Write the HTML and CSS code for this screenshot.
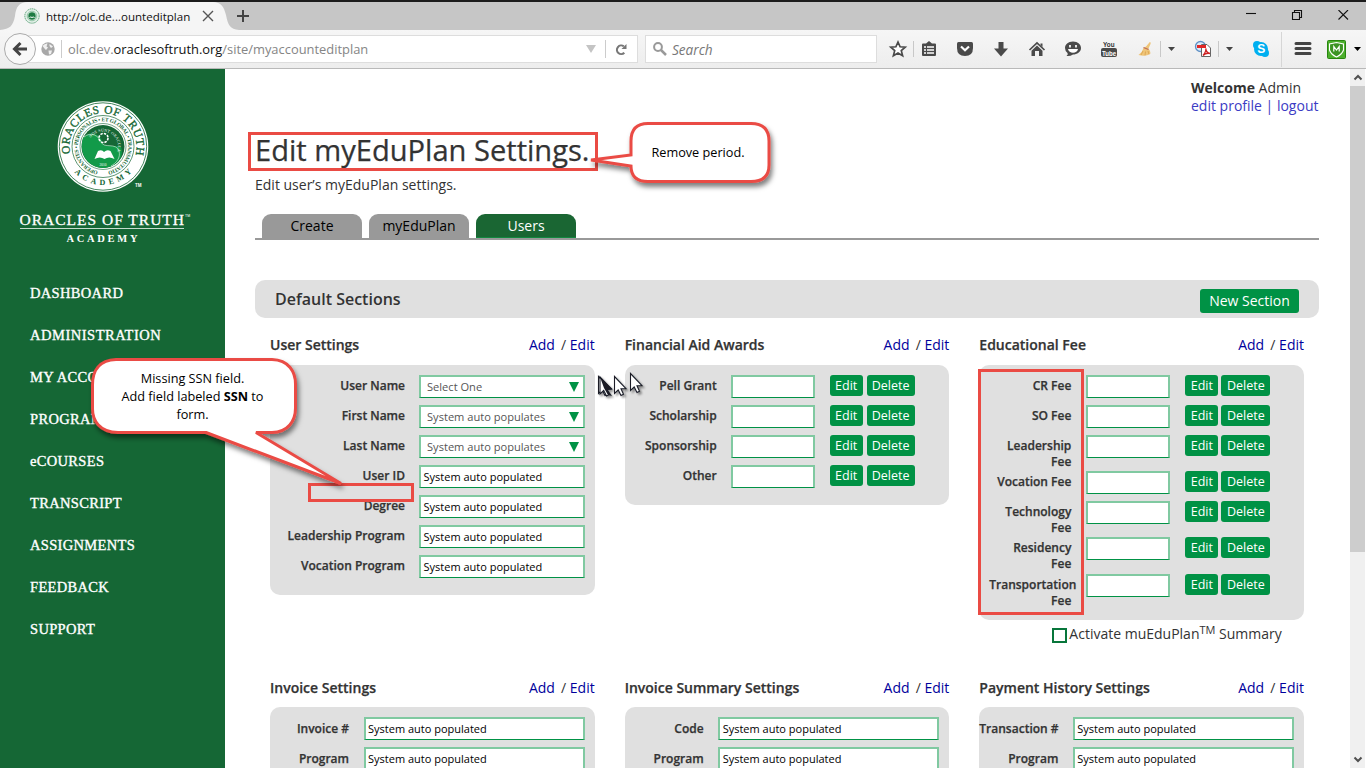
FILE: index.html
```html
<!DOCTYPE html>
<html lang="en">
<head>
<meta charset="utf-8">
<title>Edit myEduPlan Settings</title>
<link rel="stylesheet" href="styles.css">
</head>
<body>
<header class="chrome">
  <div class="tabbar">
    <svg class="tabshape" width="240" height="28" viewBox="0 0 240 28"><path d="M0 28C10 27 13 24 15 14C16 5 19 0 28 0H213C221 0 224 5 226 13C228 23 230 27 239 28Z" fill="#f5f5f5"/></svg>
    <svg class="favicon" width="16" height="16" viewBox="0 0 16 16"><circle cx="8" cy="8" r="7.200" fill="#e3f0e8" stroke="#5fa57c" stroke-dasharray="1.500 .6"/><circle cx="8" cy="8" r="4.800" fill="none" stroke="#8fc3a4"/><circle cx="8" cy="8" r="3.700" fill="#1d7a42"/><path d="M5.500 9.500q1.200-1 2.500 0q1.200-1 2.500 0" stroke="#fff" fill="none"/></svg>
    <span class="tabtitle">http://olc.de...ounteditplan</span>
    <svg class="tabclose" width="12" height="12" viewBox="0 0 12 12"><path d="M1 1L11 11M11 1L1 11" stroke="#555" stroke-width="1.400"/></svg>
    <svg class="tabplus" width="12" height="12" viewBox="0 0 12 12"><path d="M6 0V12M0 6H12" stroke="#444" stroke-width="2"/></svg>
    <svg class="winctl" width="104" height="12" viewBox="0 0 104 12"><g fill="none" stroke="#111" stroke-width="1.100"><path d="M0 3.500H10"/><path d="M46.500 2.500H53.500V9.500H46.500ZM48.500 2.500V.5H55.500V7.500H53.500"/><path d="M92.500 0L102 9.500M102 0L92.500 9.500"/></g></svg>
  </div>
  <div class="toolbar">
    <div class="urlbar">
      <svg class="globe" width="14" height="14" viewBox="0 0 14 14"><circle cx="7" cy="7" r="6.700" fill="#a8a8a8"/><path d="M1.500 4q2.500-3 5-2.500l-1 3l1.500 1l-2 2.500l-1.500-1.500zM8.500 2l3.500 2.500l-2 1.500l-1.500-2zM7.500 8.500l3.500 0l-1 3.500l-2 .5z" fill="#f0f0f0"/></svg>
      <span class="vline"></span>
      <span class="url">olc.dev.<b>oraclesoftruth.org</b>/site/myaccounteditplan</span>
      <svg class="drop" width="10" height="8"><path d="M0 0H10L5 8Z" fill="#c4c4c4"/></svg>
      <span class="vline"></span>
      <svg class="reload" width="13" height="13" viewBox="0 0 13 13"><path d="M9.300 9.800A4.300 4.300 0 1 1 8.800 3.300" fill="none" stroke="#777" stroke-width="2.100"/><path d="M6.500 6H11.500V1Z" fill="#777"/></svg>
    </div>
    <div class="back"><svg width="16" height="16" viewBox="0 0 16 16"><path d="M8.500 2L2.500 8L8.500 14M3 8H15" fill="none" stroke="#444" stroke-width="3"/></svg></div>
    <div class="search"><svg width="14" height="14" viewBox="0 0 14 14"><circle cx="5" cy="5" r="3.900" fill="none" stroke="#999" stroke-width="2"/><path d="M8 8L13 13" stroke="#999" stroke-width="2.500"/></svg><i>Search</i></div>
    <svg class="tools" width="480" height="38" viewBox="886 30 480 38">
      <path d="M898 42L900.100 46.800L905.200 47.200L901.300 50.600L902.600 55.700L898 52.900L893.400 55.700L894.700 50.600L890.800 47.200L895.900 46.800Z" fill="#fff" stroke="#4a4a4a" stroke-width="1.700"/>
      <path d="M913.500 41V57M1160.500 41V57M1218.500 41V57" stroke="#c8c8c8"/>
      <path d="M923 43.500H926L929 41L932 43.500H935Q936 43.500 936 44.500V55Q936 56 935 56H923Q922 56 922 55V44.500Q922 43.500 923 43.500Z" fill="#4a4a4a"/><path d="M924 47H926M927 47H934M924 50H926M927 50H934M924 53H926M927 53H934" stroke="#fff" stroke-width="1.500"/>
      <path d="M958.500 42H971.500Q973 42 973 43.500V48Q973 56 965 56Q957 56 957 48V43.500Q957 42 958.500 42Z" fill="#4a4a4a"/><path d="M961 46.500L965 50.200L969 46.500" fill="none" stroke="#fff" stroke-width="2.200"/>
      <path d="M998.500 42H1003.500V48.500H1008L1001 56.500L994 48.500H998.500Z" fill="#4a4a4a"/>
      <path d="M1029.500 50L1037 43L1044.500 50" fill="none" stroke="#4a4a4a" stroke-width="1.700"/><path d="M1031.500 50.700L1037 45.500L1042.500 50.700V56H1039V51H1035V56H1031.500ZM1040.500 43.500H1042.500V47L1040.500 45Z" fill="#4a4a4a"/>
      <path d="M1073 41.500C1078 41.500 1081 44.500 1081 48C1081 52 1077 54.500 1073 54.500Q1070 56.500 1066.500 56Q1068.500 54.500 1067.500 53Q1065 51 1065 48C1065 44.500 1068 41.500 1073 41.500Z" fill="#4a4a4a"/><path d="M1070 45V47.500M1076 45V47.500" stroke="#fff" stroke-width="1.700"/><path d="M1068 49H1078Q1077 52.800 1073 52.800Q1069 52.800 1068 49Z" fill="#fff"/>
      <text x="1103" y="47" class="yt" fill="#333" textLength="11.500" lengthAdjust="spacingAndGlyphs">You</text><rect x="1101" y="48" width="16" height="9" rx="2" fill="#4a4a4a"/><text x="1102" y="55.500" class="yt" fill="#fff" textLength="14" lengthAdjust="spacingAndGlyphs">Tube</text>
      <path d="M1149.800 42Q1151.500 42.500 1150.500 44L1148.500 48.500Q1150.500 51 1150.500 53.500Q1146 57 1138.500 55Q1142.500 52 1143.500 48L1146 46.500Z" fill="#efc578"/><path d="M1143 51L1141 55M1145.500 51.500L1145 55.500M1148 51L1149 54.500" stroke="#d9a04c" stroke-width=".8"/><path d="M1143.500 47.500L1148.500 49.500" stroke="#be6c5a" stroke-width="1.300"/>
      <path d="M1168 47H1175L1171.500 51ZM1226 47H1233L1229.500 51Z" fill="#444"/>
      <circle cx="1200.500" cy="46.500" r="5" fill="#dcebf8" stroke="#5f91c6" stroke-width="1.300"/><path d="M1201.500 44.500H1207L1210.500 48V56.500H1201.500Z" fill="#fff" stroke="#666"/><rect x="1197" y="45" width="9" height="3" fill="#e02727"/><path d="M1203 55.500Q1206.500 51 1205.800 48.500Q1206 52.500 1210 53.500Q1206 52.500 1203 55.500" fill="none" stroke="#c22" stroke-width="1.300"/>
      <circle cx="1261" cy="49" r="7" fill="#00aff0"/><circle cx="1257" cy="45" r="4" fill="#00aff0"/><circle cx="1265" cy="53" r="4" fill="#00aff0"/><text x="1257.200" y="53.300" class="skype" fill="#fff">S</text>
      <path d="M1281.500 32V67" stroke="#d6d6d6"/>
      <path d="M1296 43.500H1310M1296 48.500H1310M1296 53.500H1310" stroke="#444" stroke-width="3" stroke-linecap="round"/>
      <rect x="1327.500" y="40.500" width="18" height="18" rx="1" fill="#4caf2c" stroke="#28860f"/><path d="M1336.500 42.500L1343.500 44V50Q1342 54.500 1336.500 57Q1331 54.500 1329.500 50V44Z" fill="#3c9424" stroke="#fff" stroke-width="1.100"/><path d="M1333.800 51.500V46.500L1336.500 50L1339.200 46.500V51.500" fill="none" stroke="#fff" stroke-width="1.200"/>
      <path d="M1354 47H1361L1357.500 51Z" fill="#000"/>
    </svg>
  </div>
</header>

<div class="page">
  <nav class="sidebar">
    <svg class="logo" width="225" height="180" viewBox="0 69 225 180">
      <defs>
        <path id="arcTop" d="M71.600 158.500A33.500 33.500 0 1 1 134.400 158.500"/>
        <path id="arcBottom" d="M64.500 146.500A38.500 38.500 0 0 0 141.500 146.500"/>
        <path id="arcInner" d="M103 171.700A25.200 25.200 0 1 1 103.100 171.700"/>
        <path id="arcCore" d="M88 146.500A15 15 0 0 1 118 146.500A15 15 0 0 1 116 154"/>
      </defs>
      <circle cx="103" cy="146.500" r="45.300" fill="#fff"/><circle cx="103" cy="146.500" r="43.700" fill="none" stroke="#156735" stroke-width=".8"/>
      <circle cx="103" cy="146.500" r="31" fill="none" stroke="#156735" stroke-width=".7"/><circle cx="103" cy="146.500" r="23" fill="none" stroke="#156735" stroke-width=".6"/>
      <circle cx="103" cy="146.500" r="21.500" fill="#156735"/>
      <path d="M83 138C90 129 101 135 102 141C103 149 115 144 121 147C125 159 114 168 103 168C89 168 78 154 83 138Z" fill="#129a49"/>
      <path d="M84 137C91 131 99 136 101 142C104 149 116 142 119 151C121 158 116 163 111 166" fill="none" stroke="#dff0e5" stroke-width=".6"/>
      <circle cx="103.500" cy="138" r="4.500" fill="none" stroke="#fff" stroke-width="1.600" stroke-dasharray="2.400 1.100"/>
      <path d="M94.500 159L98 151Q102 149 104 152Q107 149 110.500 151L114.500 159Q109 156 104.500 159Q100 156 94.500 159Z" fill="#fff"/>
      <g class="seal" fill="#156735">
        <text font-size="11.500" class="ring"><textPath href="#arcTop" startOffset="5" textLength="120">ORACLES OF TRUTH</textPath></text>
        <text font-size="8" font-weight="bold"><textPath href="#arcBottom" startOffset="28" textLength="65">ACADEMY</textPath></text>
        <text font-size="5.500" font-weight="bold"><textPath href="#arcInner" startOffset="5" textLength="148">OPERANTES • PERSONALIS • ET GLOBAL • TRANSMUTATIO</textPath></text>
        <text font-size="4" fill="#fff"><textPath href="#arcCore" startOffset="9" textLength="43">NOS SUNT ORACULA</textPath></text>
        <text x="99.500" y="166" font-size="3.500" fill="#fff">2010</text>
        <text x="135" y="187" class="tm" font-size="4.500" font-weight="bold" fill="#fff">TM</text>
      </g>
      <g class="seal" fill="#fff"><text x="19.500" y="225" font-size="15.500" textLength="164.500" class="brand">ORACLES OF TRUTH</text><text x="185" y="217" class="tm" font-size="3.500">TM</text>
      <path d="M20 228.500H184" stroke="#c5dccd"/><text x="66.500" y="242" font-size="10.500" font-weight="bold" textLength="71">ACADEMY</text></g>
    </svg>
    <a>DASHBOARD</a><a class="wider">ADMINISTRATION</a><a>MY ACCOUNT</a><a>PROGRAMS</a><a>eCOURSES</a><a>TRANSCRIPT</a><a>ASSIGNMENTS</a><a>FEEDBACK</a><a>SUPPORT</a>
  </nav>

  <main class="main">
    <div class="welcome"><div><b>Welcome</b> Admin</div><div class="wlinks">edit profile | logout</div></div>
    <h1>Edit myEduPlan Settings.</h1>
    <p class="sub">Edit user’s myEduPlan settings.</p>
    <div class="tabs"><span>Create</span><span>myEduPlan</span><span class="on">Users</span></div>
    <div class="bar"><h2>Default Sections</h2><span class="new">New Section</span></div>

    <div class="grid">
      <section>
        <div class="head"><h3>User Settings</h3><span><a>Add</a> / <a>Edit</a></span></div>
        <div class="panel p1">
          <div class="row"><label>User Name</label><span class="in sel">Select One<i></i></span></div>
          <div class="row"><label>First Name</label><span class="in sel">System auto populates<i></i></span></div>
          <div class="row"><label>Last Name</label><span class="in sel">System auto populates<i></i></span></div>
          <div class="row"><label>User ID</label><span class="in">System auto populated</span></div>
          <div class="row"><label>Degree</label><span class="in">System auto populated</span></div>
          <div class="row"><label>Leadership Program</label><span class="in">System auto populated</span></div>
          <div class="row"><label>Vocation Program</label><span class="in">System auto populated</span></div>
        </div>
      </section>
      <section>
        <div class="head"><h3>Financial Aid Awards</h3><span><a>Add</a> / <a>Edit</a></span></div>
        <div class="panel p2">
          <div class="row"><label>Pell Grant</label><span class="in"></span><span class="btn">Edit</span><span class="btn del">Delete</span></div>
          <div class="row"><label>Scholarship</label><span class="in"></span><span class="btn">Edit</span><span class="btn del">Delete</span></div>
          <div class="row"><label>Sponsorship</label><span class="in"></span><span class="btn">Edit</span><span class="btn del">Delete</span></div>
          <div class="row"><label>Other</label><span class="in"></span><span class="btn">Edit</span><span class="btn del">Delete</span></div>
        </div>
      </section>
      <section>
        <div class="head"><h3>Educational Fee</h3><span><a>Add</a> / <a>Edit</a></span></div>
        <div class="panel p2 p3">
          <div class="row"><label>CR Fee</label><span class="in"></span><span class="btn">Edit</span><span class="btn del">Delete</span></div>
          <div class="row"><label>SO Fee</label><span class="in"></span><span class="btn">Edit</span><span class="btn del">Delete</span></div>
          <div class="row two"><label>Leadership<br>Fee</label><span class="in"></span><span class="btn">Edit</span><span class="btn del">Delete</span></div>
          <div class="row"><label>Vocation Fee</label><span class="in"></span><span class="btn">Edit</span><span class="btn del">Delete</span></div>
          <div class="row two"><label>Technology<br>Fee</label><span class="in"></span><span class="btn">Edit</span><span class="btn del">Delete</span></div>
          <div class="row two tall"><label>Residency<br>Fee</label><span class="in"></span><span class="btn">Edit</span><span class="btn del">Delete</span></div>
          <div class="row two"><label><span class="over">Transportation</span><br>Fee</label><span class="in"></span><span class="btn">Edit</span><span class="btn del">Delete</span></div>
        </div>
        <div class="activate"><span class="check"></span><span>Activate muEduPlan<sup>TM</sup> Summary</span></div>
      </section>
      <section>
        <div class="head"><h3>Invoice Settings</h3><span><a>Add</a> / <a>Edit</a></span></div>
        <div class="panel p4">
          <div class="row"><label>Invoice #</label><span class="in">System auto populated</span></div>
          <div class="row"><label>Program</label><span class="in">System auto populated</span></div>
        </div>
      </section>
      <section>
        <div class="head"><h3>Invoice Summary Settings</h3><span><a>Add</a> / <a>Edit</a></span></div>
        <div class="panel p4">
          <div class="row"><label>Code</label><span class="in">System auto populated</span></div>
          <div class="row"><label>Program</label><span class="in">System auto populated</span></div>
        </div>
      </section>
      <section>
        <div class="head"><h3>Payment History Settings</h3><span><a>Add</a> / <a>Edit</a></span></div>
        <div class="panel p4">
          <div class="row"><label>Transaction #</label><span class="in">System auto populated</span></div>
          <div class="row"><label>Program</label><span class="in">System auto populated</span></div>
        </div>
      </section>
    </div>
  </main>
  <div class="scroll"><svg width="16" height="17"><path d="M4.500 10.500L8 7L11.500 10.500" fill="none" stroke="#505050" stroke-width="2"/></svg><div class="thumb"></div><svg width="16" height="17"><path d="M4.500 6.500L8 10L11.500 6.500" fill="none" stroke="#505050" stroke-width="2"/></svg></div>
</div>

<svg class="notes" width="1366" height="768">
  <defs><filter id="sh" x="-10%" y="-20%" width="130%" height="150%"><feDropShadow dx="2" dy="4" stdDeviation="2.500" flood-color="#000" flood-opacity=".5"/></filter>
  <filter id="cs" x="-30%" y="-30%" width="200%" height="200%"><feDropShadow dx="2" dy="2" stdDeviation="1" flood-opacity=".4"/></filter>
  <path id="cur" d="M0 0V17L3.700 13.500L6.500 19L9 17.700L6.500 12.200H11.500Z" fill="#fff" stroke="#1a1d28" stroke-width="1.100"/></defs>
  <g fill="none" stroke="#ea4b44" stroke-width="3">
    <rect x="249.500" y="133.500" width="347" height="36"/>
    <rect x="309.500" y="484.500" width="103" height="16"/>
    <rect x="979.500" y="370.500" width="103" height="243"/>
    <g fill="#fff" filter="url(#sh)"><path d="M648 123.500H751Q769 123.500 769 141V165Q769 181.500 751 181.500H648Q631 181.500 631 166L591 160L631 155V141Q631 123.500 648 123.500Z"/></g>
    <g fill="#fff" filter="url(#sh)"><path stroke-linejoin="bevel" d="M116 359.500H272C289 360 295.500 372 295.500 384V408C295.500 421 288 432 272 432.500H256L341 483.500L206 432.500H118C99 432 92.500 420 92.500 409V385C92.500 371 99 360 116 359.500Z"/></g>
  </g>
  <g filter="url(#cs)"><use href="#cur" x="598.500" y="376.500"/><use href="#cur" x="600" y="377"/><path d="M600 377L612.500 389L608 390L612 396L608 395L604 388Z" fill="#1a1d28"/><use href="#cur" x="614.500" y="376.500"/><use href="#cur" x="630.500" y="373.500"/></g>
</svg>
<div class="note n1">Remove period.</div>
<div class="note n2">Missing SSN field.<br>Add field labeled <b>SSN</b> to<br>form.</div>
</body>
</html>
```
FILE: styles.css
```css
* { box-sizing: border-box; }
body { margin: 0; width: 1366px; height: 768px; overflow: hidden; position: relative; background: #fff; color: #333; font-family: "Open Sans", "Noto Sans", sans-serif; font-size: 14px; }
svg { display: block; flex: none; }
.chrome { height: 69px; border-bottom: 1px solid #b9b9b9; background: #f5f5f5; }
.tabbar { height: 30px; border-top: 2px solid #1c1c1c; background: #c6c6c6; display: flex; align-items: center; position: relative; padding-left: 24px; }
.tabshape { position: absolute; left: 0; top: 0; }
.favicon, .tabtitle, .tabclose, .tabplus { position: relative; }
.tabtitle { margin-left: 6px; width: 156px; color: #111; font-size: 11.550px; white-space: nowrap; }
.tabplus { margin-left: 23px; }
.winctl { margin-left: auto; margin-right: 16px; }
.toolbar { height: 38px; position: relative; display: flex; align-items: center; background: linear-gradient(#f6f6f6, #ededed); }
.urlbar { margin-left: 20px; width: 618px; height: 28px; background: #fff; border: 1px solid #ddd; display: flex; align-items: center; padding-left: 20px; }
.vline { width: 1px; height: 18px; background: #ccc; }
.globe { margin-right: 6px; }
.url { margin-left: 6px; width: 518px; color: #858585; font-size: 12.900px; white-space: nowrap; }
.url b { font-weight: 400; color: #111; }
.drop { margin-right: 9px; }
.reload { margin-left: 9px; }
.back { position: absolute; left: 4px; top: 3px; width: 32px; height: 32px; border-radius: 50%; border: 1px solid #aaa; background: #f8f8f8; display: grid; place-items: center; }
.search { margin-left: 7px; width: 232px; height: 28px; background: #fff; border: 1px solid #ddd; display: flex; align-items: center; padding-left: 7px; gap: 5px; color: #777; font-size: 13.600px; }
.tools { margin-left: 9px; }
.yt { font: bold 8px "Liberation Sans", sans-serif; }
.skype { font: bold 12px "Liberation Sans", sans-serif; }
.page { display: flex; height: 699px; overflow: hidden; }
.sidebar { width: 225px; background: #156735; display: flex; flex-direction: column; flex: none; }
.logo { margin-bottom: 23px; }
.seal { font-family: "Liberation Serif", serif; }
.ring { stroke: #156735; stroke-width: .350px; }
.tm { font-family: "Liberation Sans", sans-serif; }
.brand { stroke: #fff; stroke-width: .300px; }
.sidebar a { height: 42px; line-height: 42px; padding-left: 30px; color: #fff; font-family: "Liberation Serif", serif; font-size: 14.500px; letter-spacing: .330px; -webkit-text-stroke: .350px #fff; }
.sidebar .wider { letter-spacing: .520px; }
.main { width: 1125px; padding: 10px 31px 0 30px; flex: none; }
.welcome { margin-left: 936px; line-height: 18px; height: 36px; white-space: nowrap; }
.wlinks { color: #3b3bc4; }
h1, h2, h3, p { margin: 0; }
h1 { font-weight: 400; font-size: 29.100px; line-height: 40px; margin-top: 15px; white-space: nowrap; -webkit-text-stroke: .250px #333; }
.sub { line-height: 20px; margin-top: 5px; height: 39px; }
.tabs { display: flex; gap: 7px; padding-left: 7px; height: 26px; border-bottom: 2px solid #999; }
.tabs span { width: 100px; height: 24px; line-height: 24px; border-radius: 9px 9px 0 0; background: #999; color: #000; text-align: center; }
.tabs .on { background: #1a6633; color: #fff; border-bottom: 1px solid #12883f; }
.bar { margin-top: 40px; height: 38px; border-radius: 10px; background: #e0e0e0; display: flex; justify-content: space-between; padding: 0 20px; }
h2 { font-size: 16px; font-weight: 600; line-height: 38px; }
h3, label { -webkit-text-stroke: .250px #333; }
.new { margin-top: 9px; width: 99px; height: 24px; line-height: 24px; border-radius: 3px; background: #009245; color: #fff; text-align: center; white-space: nowrap; }
.grid { display: grid; grid-template-columns: repeat(3, 1fr); column-gap: 30px; margin: 0 15px; grid-template-rows: 343px auto; }
.head { height: 47px; padding-top: 17px; line-height: 20px; display: flex; justify-content: space-between; white-space: nowrap; }
.head a { color: #00009c; }
.head a:first-child { margin-right: 2.500px; }
h3 { font-size: 14px; font-weight: 600; line-height: 20px; }
.panel { background: #e0e0e0; border-radius: 10px; padding: 10px 10px 10px 0; }
.row { display: flex; height: 30px; }
.two { height: 36px; }
.tall { height: 37px; }
label { font-size: 12px; font-weight: 600; text-align: right; line-height: 16px; padding-top: 3px; white-space: nowrap; flex: none; display: flow-root; }
.p1 label { width: 135px; margin-right: 14px; }
.p2 label { width: 92px; margin-right: 14px; }
.p4 label { width: 79px; margin-right: 14.500px; padding-top: 4px; }
.p4 { margin-top: -1px; }
.in { height: 23px; flex: 1; border: 2px solid #80c9a1; border-bottom: 1px solid #009245; background: #fff; color: #000; font-size: 11px; line-height: 20px; padding-left: 2.500px; white-space: nowrap; }
.p2 .in { flex: none; width: 84px; margin-right: 15px; }
.sel { font-size: 11.100px; color: #555; padding: 0 4px 0 6px; display: flex; justify-content: space-between; align-items: center; }
.sel i { border: 5px solid transparent; border-top: 10px solid #009245; border-bottom: 0; }
.btn { width: 33px; height: 21px; line-height: 21px; border-radius: 3px; background: #009245; color: #fff; font-size: 12.500px; text-align: center; margin-right: 4px; }
.del { width: 48px; margin-right: 0; }
.p3 { height: 255px; }
.p3 label { margin-right: 15px; }
.p3 .btn { margin-right: 3px; }
.p3 .del { width: 49px; margin-right: 0; }
.over { margin-right: -5px; }
.activate { display: flex; padding-left: 73px; height: 30px; line-height: 28px; white-space: nowrap; }
.check { width: 15px; height: 15px; margin: 8px 2px 0 0; background: #fff; border: 2px solid #08763b; }
sup { font-size: 11px; line-height: 0; vertical-align: 5px; }
.scroll { width: 16px; background: #f0f0f0; border-right: 1px solid #fff; display: flex; flex-direction: column; }
.thumb { height: 466px; background: #cdcdcd; margin-bottom: auto; }
.notes { position: absolute; left: 0; top: 0; }
.note { position: absolute; color: #000; font-size: 12.700px; line-height: 18px; text-align: center; white-space: nowrap; }
.n1 { left: 631px; top: 143px; width: 134px; }
.n2 { left: 94px; top: 369px; width: 197px; }
```
